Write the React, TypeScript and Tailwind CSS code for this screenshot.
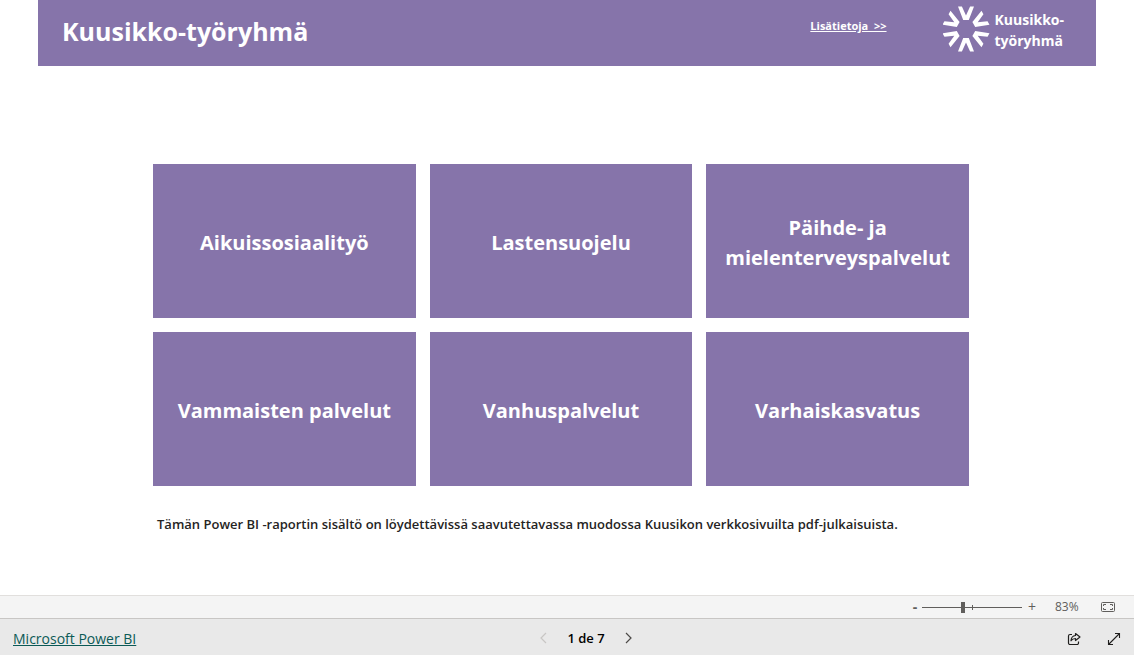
import { useState } from 'react'

const SERVICES = [
  'Aikuissosiaalityö',
  'Lastensuojelu',
  'Päihde- ja mielenterveyspalvelut',
  'Vammaisten palvelut',
  'Vanhuspalvelut',
  'Varhaiskasvatus',
]

const TOTAL_PAGES = 7

export default function App() {
  return (
    <div className="flex min-h-screen flex-col bg-white font-['Segoe_UI','Open_Sans',sans-serif]">
      <main className="mx-[38px] flex flex-1 flex-col">
        <ReportHeader />
        <div className="mt-[98px] mr-[127px] ml-[115px] grid grid-cols-3 gap-[14px]">
          {SERVICES.map((name) => (
            <button
              key={name}
              type="button"
              className="h-[154px] bg-[#8674aa] px-3 pt-1 text-xl leading-[30px] font-bold text-white"
            >
              {name}
            </button>
          ))}
        </div>
        <p className="mt-7 mb-4 ml-[119px] text-[13px] leading-5 font-semibold text-[#252423]">
          Tämän Power BI -raportin sisältö on löydettävissä saavutettavassa muodossa Kuusikon verkkosivuilta pdf-julkaisuista.
        </p>
      </main>
      <ZoomBar />
      <PageBar />
    </div>
  )
}

function ReportHeader() {
  return (
    <header className="flex h-[66px] items-start bg-[#8674aa] text-white">
      <h1 className="mt-[15px] ml-6 flex-1 text-[25px] leading-8 font-bold">Kuusikko-työryhmä</h1>
      <a href="#lisatietoja" className="mt-4 mr-14 text-[11px] leading-5 font-bold whitespace-pre underline">
        {'Lisätietoja  >>'}
      </a>
      <div className="mt-[5px] mr-8 flex items-center gap-1">
        <Logo />
        <span className="pt-0.5 text-sm leading-[21px] font-bold">
          Kuusikko-
          <br />
          työryhmä
        </span>
      </div>
    </header>
  )
}

function ZoomBar() {
  const [zoom, setZoom] = useState(83)

  return (
    <div className="flex h-[23px] items-center justify-end border-t border-[#e1dfdd] bg-[#f4f4f4] pr-[19px] text-[#605e5c]">
      <button type="button" aria-label="Zoom out" className="w-[14px] text-sm leading-5 font-bold" onClick={() => setZoom(zoom - 1)}>
        -
      </button>
      <div className="relative flex w-[100px] items-center">
        <input
          type="range"
          aria-label="Zoom"
          min={10}
          max={190}
          value={zoom}
          onChange={(e) => setZoom(Number(e.target.value))}
          className="h-3 w-full appearance-none bg-transparent [&::-webkit-slider-runnable-track]:h-px [&::-webkit-slider-runnable-track]:bg-[#605e5c] [&::-webkit-slider-thumb]:-mt-[5px] [&::-webkit-slider-thumb]:h-[11px] [&::-webkit-slider-thumb]:w-1 [&::-webkit-slider-thumb]:appearance-none [&::-webkit-slider-thumb]:bg-[#605e5c]"
        />
        <span className="pointer-events-none absolute left-1/2 h-[5px] w-px bg-[#605e5c]" />
      </div>
      <button type="button" aria-label="Zoom in" className="w-5 text-sm leading-5" onClick={() => setZoom(zoom + 1)}>
        +
      </button>
      <span className="ml-[13px] w-[46px] text-xs leading-5">{zoom}%</span>
      <button type="button" aria-label="Fit to page">
        <FitIcon />
      </button>
    </div>
  )
}

function PageBar() {
  const [page, setPage] = useState(1)

  return (
    <footer className="grid h-[37px] grid-cols-[1fr_auto_1fr] items-center border-t border-[#c8c6c4] bg-[#e9e9e9] pt-1">
      <a href="https://powerbi.microsoft.com" className="ml-[13px] justify-self-start text-sm leading-5 text-[#0b5a56] underline">
        Microsoft Power BI
      </a>
      <div className="ml-[38px] flex items-center gap-4 pb-0.5">
        <button
          type="button"
          aria-label="Previous page"
          disabled={page === 1}
          onClick={() => setPage(page - 1)}
          className="text-[#4c4a48] disabled:text-[#c8c6c4]"
        >
          <Chevron d="M9 2 4 7l5 5" />
        </button>
        <span className="text-[13px] leading-5 font-semibold text-black">
          {page} de {TOTAL_PAGES}
        </span>
        <button
          type="button"
          aria-label="Next page"
          disabled={page === TOTAL_PAGES}
          onClick={() => setPage(page + 1)}
          className="text-[#4c4a48] disabled:text-[#c8c6c4]"
        >
          <Chevron d="m5 2 5 5-5 5" />
        </button>
      </div>
      <div className="mr-[13px] flex items-center gap-[26px] justify-self-end text-[#201f1e]">
        <button type="button" aria-label="Share">
          <ShareIcon />
        </button>
        <button type="button" aria-label="Full screen">
          <ExpandIcon />
        </button>
      </div>
    </footer>
  )
}

function Logo() {
  return (
    <svg viewBox="-23 -24 48 48" fill="currentColor" className="h-12 w-12">
      {[0, 60, 120, 180, 240, 300].map((angle) => (
        <path key={angle} d="M-8-22.500h3.900L0-13.500l4.100-9H8L2.800-9h-5.600z" transform={`rotate(${angle})`} />
      ))}
    </svg>
  )
}

function Chevron({ d }: { d: string }) {
  return (
    <svg viewBox="0 0 14 14" fill="none" stroke="currentColor" strokeWidth="1.2" className="h-3.5 w-3.5">
      <path d={d} />
    </svg>
  )
}

function FitIcon() {
  return (
    <svg viewBox="0 0 14 10" fill="none" stroke="currentColor" className="h-2.5 w-3.5">
      <rect x=".5" y=".5" width="13" height="9" rx="1" />
      <path d="M5 2.500H2.500V4M2.500 6v1.500H5M9 2.500h2.500V4M11.500 6v1.500H9" />
    </svg>
  )
}

function ShareIcon() {
  return (
    <svg viewBox="0 0 14 14" fill="none" stroke="currentColor" strokeWidth="1.2" strokeLinejoin="round" className="h-3.5 w-3.5">
      <path d="M5 2.500H3A1.500 1.500 0 0 0 1.500 4v7A1.500 1.500 0 0 0 3 12.500h7a1.500 1.500 0 0 0 1.500-1.500V9.500" />
      <path d="M8.500 1.500 13 5 8.500 8.500v-2C6.500 6.500 5 7.200 4 8.800 4.200 5.500 6 3.700 8.500 3.500z" />
    </svg>
  )
}

function ExpandIcon() {
  return (
    <svg viewBox="0 0 14 14" fill="none" stroke="currentColor" strokeWidth="1.1" className="h-3.5 w-3.5">
      <path d="M8 1.500h4.500V6M12.500 1.500l-11 11M1.500 8v4.500H6" />
    </svg>
  )
}
